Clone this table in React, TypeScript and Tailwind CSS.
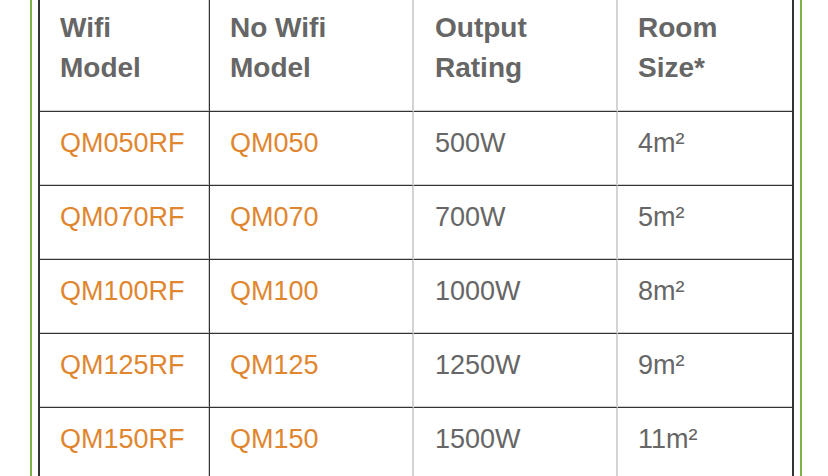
import React from "react";

const rows = [
  ["QM050RF", "QM050", "500W", "4m²"],
  ["QM070RF", "QM070", "700W", "5m²"],
  ["QM100RF", "QM100", "1000W", "8m²"],
  ["QM125RF", "QM125", "1250W", "9m²"],
  ["QM150RF", "QM150", "1500W", "11m²"],
];

const colCls = [
  "w-[170px] pl-[20px] border-r border-[#333] shadow-[inset_-1px_0_0_#cfcfcf,inset_0_-1px_0_#cfcfcf]",
  "w-[204px] pl-[20px] border-r-2 border-r-[#d4d4d4] shadow-[inset_0_-1px_0_#cfcfcf]",
  "w-[204px] pl-[21px] border-r-2 border-r-[#d4d4d4] shadow-[inset_0_-1px_0_#cfcfcf]",
  "w-[174px] pl-[20px] shadow-[inset_0_-1px_0_#cfcfcf]",
];

const headers: React.ReactNode[] = [
  <>Wifi<br />Model</>,
  <>No Wifi<br />Model</>,
  <>Output<br />Rating</>,
  <>Room<br />Size*</>,
];

export default function App() {
  return (
    <div className="w-[828px] h-[476px] overflow-hidden bg-white font-['Liberation_Sans',Arial,sans-serif]">
      <div className="ml-[30px] w-[772px] h-[476px] border-l-2 border-r-2 border-[#7db343] px-[6px]">
        <div className="w-[756px] h-[476px] border-l-2 border-r-2 border-[#333] overflow-hidden">
          <div className="flex">
            {headers.map((h, i) => (
              <div
                key={i}
                className={`${colCls[i]} h-[112px] pt-[8px] border-b border-b-[#333] text-[28px] leading-[40px] font-bold text-[#666]`}
              >
                {h}
              </div>
            ))}
          </div>
          {rows.map((r, ri) => (
            <div key={ri} className="flex">
              {r.map((c, ci) => (
                <div
                  key={ci}
                  className={`${colCls[ci]} h-[74px] pt-[11px] border-b border-b-[#333] text-[27px] leading-[40px] ${
                    ci < 2 ? "text-[#e0862f]" : "text-[#666]"
                  }`}
                >
                  {c}
                </div>
              ))}
            </div>
          ))}
        </div>
      </div>
    </div>
  );
}
